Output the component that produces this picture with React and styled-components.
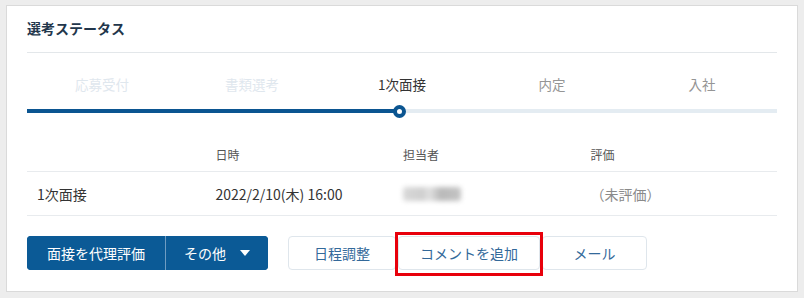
import React from "react";
import styled, { createGlobalStyle } from "styled-components";

const Global = createGlobalStyle`
  html, body { margin: 0; padding: 0; }
  body {
    background: #ededed;
    padding: 5px 6px 6px;
    font-family: "Noto Sans CJK JP", "Noto Sans", sans-serif;
    color: #333;
  }
  * { box-sizing: border-box; }
`;

const Panel = styled.section`
  width: 792px;
  height: 287px;
  background: #fff;
  border: 1px solid #dadada;
  padding: 0 20px;
`;

const Header = styled.h2`
  margin: 0;
  padding: 12px 0 14px;
  font-size: 14px;
  line-height: 20px;
  font-weight: 700;
  color: #22364b;
  border-bottom: 1px solid #e3e7ea;
`;

const Steps = styled.div`
  padding-top: 21px;
`;

const StepLabels = styled.div`
  display: grid;
  grid-template-columns: repeat(5, 1fr);
`;

const StepLabel = styled.div`
  text-align: center;
  font-size: 13.5px;
  line-height: 20px;
  color: ${(p) => (p.$state === "done" ? "#dfe7ee" : p.$state === "active" ? "#333" : "#959595")};
`;

const Track = styled.div`
  position: relative;
  margin-top: 15px;
  height: 4px;
  background: #e4ecf2;
`;

const Fill = styled.div`
  height: 100%;
  background: #0b5591;
`;

const Dot = styled.span`
  position: absolute;
  top: 50%;
  width: 13px;
  height: 13px;
  margin: -6.5px 0 0 -6.5px;
  border-radius: 50%;
  background: #fff;
  border: 4px solid #0b5591;
`;

const Table = styled.div`
  margin-top: 25px;
`;

const Row = styled.div`
  display: grid;
  grid-template-columns: repeat(4, 1fr);
  align-items: center;
  height: ${(p) => (p.$head ? "34px" : "44px")};
  border-bottom: 1px solid #e8ebee;
  font-size: ${(p) => (p.$head ? "12px" : "14px")};
  color: ${(p) => (p.$head ? "#555" : "#333")};
  line-height: 18px;
`;

const Cell = styled.div`
  padding-left: ${(p) => (p.$first ? "10px" : "1px")};
  color: ${(p) => (p.$muted ? "#8a8a8a" : "inherit")};
`;

const Blur = styled.div`
  width: 58px;
  height: 14px;
  border-radius: 3px;
  background: linear-gradient(90deg, #d8d8d8 0%, #cfcfcf 35%, #e2e2e2 45%, #b9b9b9 65%, #c4c4c4 100%);
  filter: blur(2.5px);
`;

const Actions = styled.div`
  display: flex;
  align-items: center;
  margin-top: 20px;
`;

const PrimaryGroup = styled.div`
  display: flex;
  height: 34px;
  border-radius: 4px;
  overflow: hidden;
  background: #0b5a96;
`;

const PrimaryButton = styled.button`
  display: flex;
  align-items: center;
  justify-content: center;
  gap: 14px;
  width: ${(p) => p.$w}px;
  height: 100%;
  border: 0;
  padding: 0;
  background: #0b5a96;
  color: #fff;
  font-family: inherit;
  font-size: 14px;
  & + & {
    border-left: 1px solid #6f9cc2;
  }
`;

const SecondaryGroup = styled.div`
  display: flex;
  align-items: center;
  gap: 2px;
  margin-left: 20px;
`;

const Highlight = styled.div`
  position: relative;
  &::after {
    content: "";
    position: absolute;
    top: -4px;
    bottom: -6px;
    left: -3px;
    right: -3px;
    border: 3px solid #e8000b;
    pointer-events: none;
  }
`;

const SecondaryButton = styled.button`
  display: flex;
  align-items: center;
  justify-content: center;
  width: ${(p) => p.$w}px;
  height: 34px;
  padding: 0;
  border: 1px solid #dfe6ec;
  border-radius: 4px;
  background: #fff;
  color: #33699a;
  font-family: inherit;
  font-size: 14px;
`;

const steps = [
  { label: "応募受付", state: "done" },
  { label: "書類選考", state: "done" },
  { label: "1次面接", state: "active" },
  { label: "内定", state: "todo" },
  { label: "入社", state: "todo" },
];

export default function App() {
  const progress = 49.6;
  return (
    <>
      <Global />
      <Panel>
        <Header>選考ステータス</Header>
        <Steps>
          <StepLabels>
            {steps.map((s) => (
              <StepLabel key={s.label} $state={s.state}>
                {s.label}
              </StepLabel>
            ))}
          </StepLabels>
          <Track>
            <Fill style={{ width: `${progress}%` }} />
            <Dot style={{ left: `${progress}%` }} />
          </Track>
        </Steps>
        <Table>
          <Row $head>
            <Cell $first />
            <Cell>日時</Cell>
            <Cell>担当者</Cell>
            <Cell>評価</Cell>
          </Row>
          <Row>
            <Cell $first>1次面接</Cell>
            <Cell>2022/2/10(木) 16:00</Cell>
            <Cell>
              <Blur />
            </Cell>
            <Cell $muted>（未評価）</Cell>
          </Row>
        </Table>
        <Actions>
          <PrimaryGroup>
            <PrimaryButton $w={138}>面接を代理評価</PrimaryButton>
            <PrimaryButton $w={103}>
              その他
              <svg width="10" height="6" viewBox="0 0 10 6">
                <polygon points="0,0 10,0 5,6" fill="#fff" />
              </svg>
            </PrimaryButton>
          </PrimaryGroup>
          <SecondaryGroup>
            <SecondaryButton $w={108}>日程調整</SecondaryButton>
            <Highlight>
              <SecondaryButton $w={142}>コメントを追加</SecondaryButton>
            </Highlight>
            <SecondaryButton $w={105}>メール</SecondaryButton>
          </SecondaryGroup>
        </Actions>
      </Panel>
    </>
  );
}
